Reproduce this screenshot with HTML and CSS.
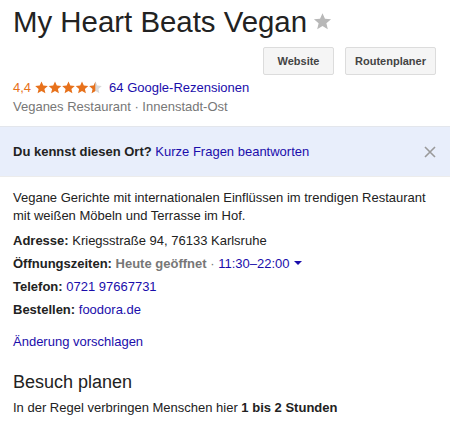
FILE: index.html
```html
<!DOCTYPE html>
<html lang="de">
<head>
<meta charset="utf-8">
<link rel="stylesheet" href="styles.css">
</head>
<body>
<div class="panel">
  <div class="head">
    <h1 class="title">My Heart Beats Vegan<svg class="fav" width="19" height="19" viewBox="0 0 24 24"><path fill="#b8b8b8" d="M12 1.5l3.1 7.1 7.7.6-5.9 5 1.8 7.5L12 17.7l-6.7 4 1.8-7.5-5.9-5 7.7-.6z"/></svg></h1>
    <div class="actions">
      <span class="btn btn-web">Website</span>
      <span class="btn btn-route">Routenplaner</span>
    </div>
    <div class="rating">
      <span class="score">4,4</span>
      <span class="stars">
        <svg width="68" height="13" viewBox="0 0 68 13">
          <defs>
            <path id="st" d="M6.5 0.5l1.8 4.1 4.5.4-3.4 2.9 1 4.4-3.9-2.3-3.9 2.3 1-4.4L0.2 5l4.5-.4z"/>
            <clipPath id="half"><rect x="0" y="0" width="6.3" height="13"/></clipPath>
          </defs>
          <use href="#st" x="0" fill="#e7711b"/>
          <use href="#st" x="13.5" fill="#e7711b"/>
          <use href="#st" x="27" fill="#e7711b"/>
          <use href="#st" x="40.5" fill="#e7711b"/>
          <g transform="translate(54,0)">
            <use href="#st" fill="#d9d9d9"/>
            <use href="#st" fill="#e7711b" clip-path="url(#half)"/>
          </g>
        </svg>
      </span>
      <a class="link">64 Google-Rezensionen</a>
    </div>
    <div class="category">Veganes Restaurant · Innenstadt-Ost</div>
  </div>

  <div class="banner">
    <div><b>Du kennst diesen Ort?</b> <a class="link">Kurze Fragen beantworten</a></div>
    <svg class="close" width="12" height="12" viewBox="0 0 12 12"><path d="M1 1L11 11M11 1L1 11" stroke="#9a9a9a" stroke-width="1.6"/></svg>
  </div>

  <div class="info">
    <p class="desc">Vegane Gerichte mit internationalen Einflüssen im trendigen Restaurant mit weißen Möbeln und Terrasse im Hof.</p>
    <div class="row"><b>Adresse:</b> Kriegsstraße 94, 76133 Karlsruhe</div>
    <div class="row"><b>Öffnungszeiten:</b> <span class="open">Heute geöffnet</span> <span class="dot">·</span> <a class="link">11:30–22:00</a><span class="caret"></span></div>
    <div class="row"><b>Telefon:</b> <a class="link">0721 97667731</a></div>
    <div class="row"><b>Bestellen:</b> <a class="link">foodora.de</a></div>
    <div class="suggest"><a class="link">Änderung vorschlagen</a></div>
  </div>

  <div class="plan">
    <h2>Besuch planen</h2>
    <div class="row">In der Regel verbringen Menschen hier <b>1 bis 2 Stunden</b></div>
  </div>
</div>
</body>
</html>
```
FILE: styles.css
```css
html, body {
  margin: 0;
  padding: 0;
  background: #fff;
}
body {
  font-family: Arial, "Liberation Sans", sans-serif;
  color: #222;
  font-size: 13px;
  width: 450px;
  overflow: hidden;
}
.head {
  padding: 0 13px;
}
.title {
  margin: 0;
  padding-top: 4px;
  font-size: 29.4px;
  font-weight: normal;
  line-height: 36px;
  color: #222;
  white-space: nowrap;
}
.fav {
  vertical-align: 1px;
  margin-left: 6px;
}
.actions {
  display: flex;
  justify-content: flex-end;
  gap: 11px;
  margin-top: 7px;
  padding-right: 1px;
}
.btn {
  display: inline-flex;
  align-items: center;
  justify-content: center;
  box-sizing: border-box;
  height: 28px;
  border: 1px solid #dcdcdc;
  border-radius: 2px;
  background: #f5f5f5;
  color: #444;
  font-size: 11px;
  font-weight: bold;
}
.btn-web {
  width: 71px;
}
.btn-route {
  width: 91px;
}
.rating {
  display: flex;
  align-items: center;
  height: 18px;
  margin-top: 3px;
}
.score {
  color: #e7711b;
  margin-right: 4px;
}
.stars {
  display: inline-flex;
  margin-right: 6px;
}
.link {
  color: #1a0dab;
  text-decoration: none;
}
.category {
  color: #777;
  margin-top: 3px;
  line-height: 16px;
}
.banner {
  margin-top: 11px;
  height: 49px;
  background: #e8eefb;
  border-top: 1px solid #e3e6ec;
  border-bottom: 1px solid #ececec;
  display: flex;
  align-items: center;
  justify-content: space-between;
  padding: 0 14px 0 13px;
}
.banner b {
  color: #222;
}
.info {
  padding: 12px 13px 0;
}
.desc {
  margin: 0;
  line-height: 18px;
}
.row {
  line-height: 23px;
}
.info .row:first-of-type {
  margin-top: 4px;
}
.open {
  color: #777;
  font-weight: bold;
}
.dot {
  color: #777;
}
.caret {
  display: inline-block;
  width: 0;
  height: 0;
  border-left: 4px solid transparent;
  border-right: 4px solid transparent;
  border-top: 4px solid #1a0dab;
  margin-left: 4px;
  vertical-align: 3px;
}
.suggest {
  margin-top: 12px;
  line-height: 18px;
}
.plan {
  padding: 0 13px;
  margin-top: 19px;
}
.plan h2 {
  margin: 0;
  font-size: 18px;
  font-weight: normal;
  line-height: 24px;
  color: #222;
}
.plan .row {
  margin-top: 5px;
  line-height: 18px;
}
```
